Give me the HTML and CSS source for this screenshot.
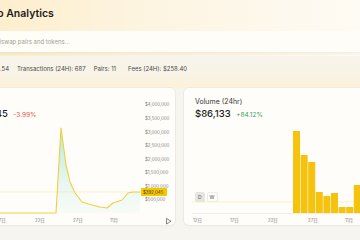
FILE: index.html
```html
<!DOCTYPE html>
<html lang="zh">
<head>
    <meta charset="UTF-8">
    <meta name="viewport" content="width=device-width, initial-scale=1.0">
    <title>Info Analytics</title>
    <link rel="stylesheet" href="styles.css">
</head>
<body>
    <div class="page">
        <!-- Header -->
        <header class="top">
            <div class="brand">
                <svg class="logo" viewBox="0 0 20 20"><circle cx="10" cy="10" r="9" fill="#f5c400"/></svg>
                <h1>Info Analytics</h1>
            </div>
            <div class="search">
                <input type="text" placeholder="Search Uniswap pairs and tokens...">
            </div>
        </header>

        <!-- Global stats -->
        <div class="stats">
            <span class="stat">ETH Price: $3,123.54</span>
            <span class="stat">Transactions (24H): 687</span>
            <span class="stat">Pairs: 11</span>
            <span class="stat fees">Fees (24H): $258.40</span>
        </div>

        <!-- Charts -->
        <div class="charts">
            <section class="card liquidity">
                <svg class="chart" width="218" height="137" viewBox="-43 88 218 137">
                    <defs>
                        <linearGradient id="liqFill" x1="0" y1="128" x2="0" y2="213" gradientUnits="userSpaceOnUse">
                            <stop offset="0" stop-color="#9fe3d6" stop-opacity="0.85"/>
                            <stop offset="1" stop-color="#e6f7f1" stop-opacity="0.3"/>
                        </linearGradient>
                    </defs>
                    <g class="axis-y">
                        <text x="145" y="105.5">$4,000,000</text>
                        <text x="145" y="119.5">$3,500,000</text>
                        <text x="145" y="133.5">$3,000,000</text>
                        <text x="145" y="146.5">$2,500,000</text>
                        <text x="145" y="160.5">$2,000,000</text>
                        <text x="145" y="173.5">$1,500,000</text>
                        <text x="145" y="187.5">$1,000,000</text>
                        <text x="145" y="200.5">$500,000</text>
                    </g>
                    <path class="area" d="M-43,213 L56,213 L61,128 L64,150 L66,165 L70,182 L75,193 L82,202 L92,205 L100,207 L107,208 L113,203 L122,200 L128,193 L133,192 L140,192 L140,213 Z"/>
                    <line class="price-line" x1="-43" y1="192" x2="141" y2="192"/>
                    <path class="line" d="M-43,213 L56,213 L61,128 L64,150 L66,165 L70,182 L75,193 L82,202 L92,205 L100,207 L107,208 L113,203 L122,200 L128,193 L133,192 L140,192"/>
                    <rect class="price-tag" x="141" y="188" width="26" height="8" rx="1"/>
                    <text class="price-text" x="143" y="193.8">$392,045</text>
                    <g class="axis-x">
                        <text x="-3" y="222">17日</text>
                        <text x="35" y="222">22日</text>
                        <text x="73" y="222">27日</text>
                        <text x="110" y="222">11月</text>
                    </g>
                    <path class="play" d="M166.5,218.5 L166.5,224 M166.5,218.5 L171,221.2 L166.5,224"/>
                </svg>
                <div class="card-head">
                    <div class="label">Liquidity</div>
                    <div class="value">$392,045 <span class="change down">-3.99%</span></div>
                </div>
            </section>

            <section class="card">
                <svg class="chart" width="218" height="137" viewBox="184 88 218 137">
                    <line class="base-line" x1="192" y1="213.5" x2="402" y2="213.5"/>
                    <line class="price-line" x1="192" y1="202" x2="402" y2="202"/>
                    <g class="bars">
                        <rect x="293" y="131" width="7" height="82"/>
                        <rect x="300.6" y="155" width="7" height="58"/>
                        <rect x="308.2" y="162" width="7" height="51"/>
                        <rect x="315.8" y="192" width="7" height="21"/>
                        <rect x="323.4" y="196" width="7" height="17"/>
                        <rect x="331" y="193" width="7" height="20"/>
                        <rect x="338.6" y="207" width="7" height="6"/>
                        <rect x="346.2" y="207" width="7" height="6"/>
                        <rect x="353.8" y="185" width="7" height="28"/>
                    </g>
                    <g class="axis-x">
                        <text x="193" y="222">12日</text>
                        <text x="230" y="222">17日</text>
                        <text x="268" y="222">22日</text>
                        <text x="308" y="222">27日</text>
                        <text x="345" y="222">11月</text>
                    </g>
                </svg>
                <div class="card-head">
                    <div class="label">Volume (24hr)</div>
                    <div class="value">$86,133 <span class="change up">+84.12%</span></div>
                </div>
                <div class="toggle">
                    <button class="active">D</button>
                    <button>W</button>
                </div>
            </section>
        </div>
    </div>
</body>
</html>
```

FILE: styles.css
```css
* {
    box-sizing: border-box;
}

html, body {
    margin: 0;
    padding: 0;
    height: 100%;
    overflow: hidden;
}

body {
    font-family: Inter, "Noto Sans CJK SC", sans-serif;
    color: #1c1c1c;
    background:
        linear-gradient(90deg, #fdeecd 0%, #fdf5e3 45%, #fefbf4 100%) 0 0 / 100% 56px no-repeat,
        linear-gradient(180deg, #f7f4ec 56px, #f8f3e6 74px, #fdf1d8 88px, #f6f5f0 89px);
}

.page {
    width: 466px;
    margin-left: -53px;
    padding: 0 10px;
}

/* Header */
.top {
    padding-top: 7px;
}

.brand {
    display: flex;
    align-items: center;
    gap: 7px;
    height: 14px;
}

.logo {
    width: 20px;
    height: 14px;
}

.brand h1 {
    margin: 0;
    font-size: 10.5px;
    font-weight: 600;
    line-height: 14px;
}

.search {
    margin-top: 10px;
    height: 21px;
    display: flex;
    align-items: center;
    padding-left: 13px;
    background-color: #fffdf8;
    border-radius: 6px;
    box-shadow: 0 2px 3px rgba(110, 90, 50, 0.08);
}

.search input {
    border: none;
    outline: none;
    background: transparent;
    padding: 0;
    width: 300px;
    font-family: inherit;
    font-size: 6px;
    color: #333;
}

.search input::placeholder {
    color: #a29d93;
}

/* Global stats */
.stats {
    display: flex;
    gap: 8px;
    margin-top: 12px;
    margin-left: -7px;
    height: 10px;
    font-size: 6px;
    line-height: 10px;
    color: #4a4a4a;
}

.stats .fees {
    margin-left: 4px;
}

/* Charts */
.charts {
    display: grid;
    grid-template-columns: 218px 218px;
    gap: 9px;
    margin-top: 14px;
}

.card {
    display: grid;
    height: 137px;
    background-color: #fffdf9;
    border-radius: 5px;
    box-shadow: 0 0 0 1px #eeeae1, 0 1px 3px rgba(0, 0, 0, 0.04);
    overflow: hidden;
}

.card > * {
    grid-area: 1 / 1;
}

.chart {
    display: block;
}

.card-head {
    align-self: start;
    padding: 10px 11px 0;
}

.liquidity .card-head {
    padding-left: 6px;
}

.card-head .label {
    font-size: 7px;
    line-height: 8px;
    color: #333;
}

.card-head .value {
    margin-top: 2px;
    font-size: 9.5px;
    font-weight: 500;
    line-height: 12px;
}

.change {
    margin-left: 3px;
    font-size: 6.5px;
    font-weight: 400;
}

.change.down {
    color: #e2574c;
}

.change.up {
    color: #36a269;
}

.toggle {
    align-self: end;
    justify-self: start;
    display: flex;
    gap: 2px;
    margin: 0 0 23px 11px;
}

.toggle button {
    height: 10px;
    min-width: 8px;
    padding: 0 2px;
    border: 1px solid #efece5;
    border-radius: 2px;
    background-color: #fcfbf8;
    font-family: inherit;
    font-size: 5px;
    color: #555;
}

.toggle button.active {
    background-color: #e7e5e1;
    border-color: #e7e5e1;
}

/* Chart drawing */
.axis-y text,
.axis-x text {
    font-size: 4.4px;
    fill: #7d7b76;
}

.area {
    fill: url(#liqFill);
}

.line {
    fill: none;
    stroke: #f1cf3c;
    stroke-width: 1.1;
    stroke-linejoin: round;
}

.price-line {
    stroke: #f4e6ad;
    stroke-width: 0.6;
}

.base-line {
    stroke: #e6e2d8;
    stroke-width: 0.6;
}

.price-tag {
    fill: #f6c700;
}

.price-text {
    font-size: 4.4px;
    fill: #3a3420;
}

.bars rect {
    fill: #f5c20e;
}

.play {
    fill: none;
    stroke: #555;
    stroke-width: 0.7;
    stroke-linejoin: round;
}
```
